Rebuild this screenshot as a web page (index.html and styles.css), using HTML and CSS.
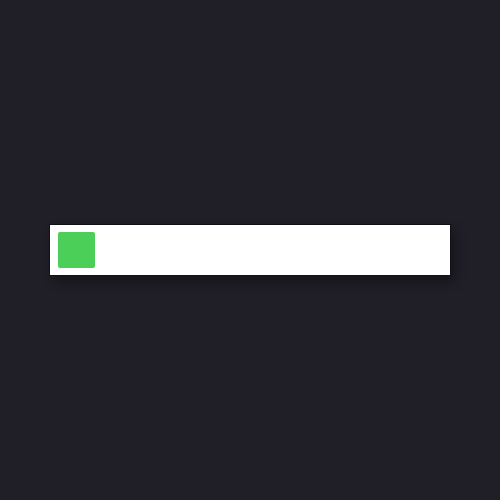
FILE: index.html
```html
<!DOCTYPE html>
<html>
<head>
<meta charset="utf-8">
<link rel="stylesheet" href="styles.css">
</head>
<body>
<main class="stage">
  <div class="track">
    <div class="block"></div>
  </div>
</main>
</body>
</html>
```

FILE: styles.css
```css
html, body {
  margin: 0;
  padding: 0;
  width: 500px;
  height: 500px;
  background: #201f28;
  font-family: "Liberation Sans", Arial, sans-serif;
}
.stage {
  height: 500px;
  display: flex;
  align-items: center;
  justify-content: center;
}
.track {
  width: 402px;
  height: 52px;
  box-sizing: border-box;
  background: #ffffff;
  border: 1px solid #111016;
  padding: 7px 8px;
  display: flex;
  align-items: center;
  box-shadow: 4px 6px 10px rgba(0, 0, 0, 0.35);
}
.block {
  width: 37px;
  height: 36px;
  background: #4ccf58;
  border-radius: 2px;
}
```
